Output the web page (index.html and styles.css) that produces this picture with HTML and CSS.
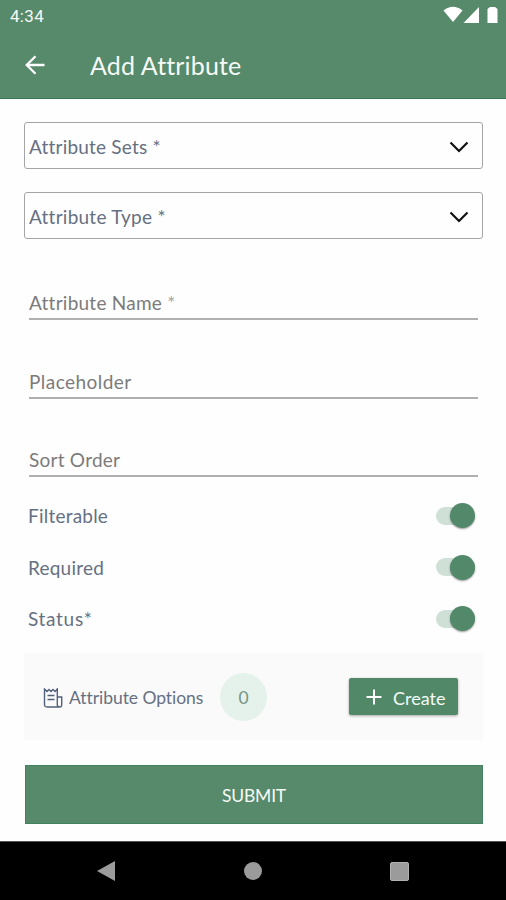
FILE: index.html
```html
<!DOCTYPE html>
<html lang="en">
<head>
<meta charset="utf-8">
<title>Add Attribute</title>
<link rel="stylesheet" href="styles.css">
</head>
<body>
<header class="header">
  <div class="statusbar">
    <span class="clock">4:34</span>
    <svg class="signals" width="56" height="18" viewBox="0 0 56 18" fill="#fff"><path d="M0.5 4.5Q10 -3 19.500 4.500L10 16Z"/><path d="M36 1V17H20.500Z"/><path d="M44.500 3L47 1H52L54.500 3V17H44.500Z"/></svg>
  </div>
  <div class="appbar">
    <svg width="20" height="20" viewBox="0 0 20 20" fill="none" stroke="#fff" stroke-width="2.300"><path d="M19.500 10H2M10.500 1.200L1.700 10L10.500 18.800"/></svg>
    <h1 class="title">Add Attribute</h1>
  </div>
</header>
<main class="form">
  <div class="select"><span class="sets">Attribute Sets *</span><svg width="20" height="12" viewBox="0 0 20 12" fill="none" stroke="#111" stroke-width="2.200"><path d="M1.500 1.500L10 10L18.500 1.500"/></svg></div>
  <div class="select"><span class="type">Attribute Type *</span><svg width="20" height="12" viewBox="0 0 20 12" fill="none" stroke="#111" stroke-width="2.200"><path d="M1.500 1.500L10 10L18.500 1.500"/></svg></div>
  <div class="fields">
    <div class="field"><span class="name">Attribute Name <i class="star">*</i></span></div>
    <div class="field"><span class="holder">Placeholder</span></div>
    <div class="field"><span class="sort">Sort Order</span></div>
  </div>
  <div class="switches">
    <div class="row"><span class="filterable">Filterable</span><span class="track"><span class="thumb"></span></span></div>
    <div class="row"><span class="required">Required</span><span class="track"><span class="thumb"></span></span></div>
    <div class="row"><span class="status">Status*</span><span class="track"><span class="thumb"></span></span></div>
  </div>
  <section class="options">
    <svg width="20" height="20" viewBox="0 0 20 20" fill="none" stroke="#52627a" stroke-width="1.400"><path d="M1.500 1L4 3.500L6 1.500L8 3.500L10 1.500L12 3.500L14.300 1V16.500Q14.300 19 16.500 19H4Q1.500 19 1.500 16.500ZM14.300 9H18.700V16.800Q18.700 19 16.500 19M4.500 7.500H11.500M4.500 11.500H11.500"/></svg>
    <span class="options-label">Attribute Options</span>
    <span class="count">0</span>
    <button class="create"><svg width="16" height="16" viewBox="0 0 16 16" stroke="#fff" stroke-width="2"><path d="M8 0.500V15.500M0.500 8H15.500"/></svg><span>Create</span></button>
  </section>
  <button class="submit">SUBMIT</button>
</main>
<nav class="navbar">
  <svg width="20" height="22" viewBox="0 0 20 22"><path d="M1 11L19 1V21Z" fill="#9b9b9b"/></svg>
  <span class="home"></span>
  <span class="recent"></span>
</nav>
</body>
</html>
```
FILE: styles.css
```css
* { box-sizing: border-box; }
body {
  margin: 0;
  height: 900px;
  display: flex;
  flex-direction: column;
  background: #fefefe;
  color: #667082;
  font: 19px/24px Lato, "Liberation Sans", sans-serif;
  font-variant-ligatures: none;
  white-space: nowrap;
}
button { border: 0; padding: 0; color: #f5faf6; font: inherit; }
svg { display: block; flex: none; }

.header { height: 99px; background: #57896b; border-bottom: 1px solid #397a55; color: #f5faf6; }
.statusbar { height: 32px; padding: 0 7px 0 10px; display: flex; justify-content: space-between; align-items: center; }
.signals { margin-bottom: 2px; }
.clock { font: 17px/20px Roboto, sans-serif; letter-spacing: .3px; }
.appbar { height: 66px; padding-left: 25px; display: flex; align-items: center; gap: 45px; }
.title { margin: 0 0 1px; font-size: 25px; line-height: 32px; font-weight: 400; letter-spacing: .15px; }

.form { height: 742px; padding: 23px 23px 0 24px; }
.select {
  height: 47px;
  margin-bottom: 23px;
  padding: 2px 13px 0 4px;
  border: 1px solid #a5a5a5;
  border-radius: 3px;
  display: flex;
  align-items: center;
  justify-content: space-between;
}
.sets { letter-spacing: .2px; }
.type, .name { letter-spacing: .25px; }
.holder { letter-spacing: .45px; }
.sort { letter-spacing: .25px; }
.filterable, .required { letter-spacing: .22px; }
.status { letter-spacing: .7px; }

.fields { padding: 12px 5px 0; color: #7b7b7b; }
.field { height: 78.5px; padding: 0 0 3px; display: flex; align-items: flex-end; border-bottom: 2px solid #b0b0b0; }
.field:first-child { height: 46px; }
.star { font-style: normal; color: #a5a5a5; }

.switches { padding: 27px 8px 0 4px; }
.row { height: 51.5px; display: flex; justify-content: space-between; align-items: flex-start; }
.row:last-child { height: 39px; }
.row .track { width: 39px; height: 18px; margin-top: 2.500px; border-radius: 9px; background: #cfe0d7; display: flex; justify-content: flex-end; align-items: center; }
.thumb { width: 25px; height: 25px; border-radius: 50%; background: #51896a; box-shadow: 0 1px 2px #0006; }

.options { height: 87px; margin-top: 7px; padding: 0 25px 0 19px; display: flex; align-items: center; background: #fafafa; }
.options svg { margin-top: 2px; }
.options-label { margin-left: 6px; width: 135px; font-size: 17.5px; letter-spacing: -.05px; padding-top: 3px; }
.count { width: 47px; height: 48px; margin-left: 16px; border-radius: 50%; background: #e5f2ec; color: #759582; font-size: 17.5px; display: flex; align-items: center; justify-content: center; padding-top: 3px; }
.create { width: 109px; height: 37px; margin-left: auto; padding: 2px 0 0 17px; border-radius: 2px; background: #518968; box-shadow: 0 1px 3px #0005; font-size: 18px; display: flex; align-items: center; gap: 11px; }
.options .create svg { margin: 0 0 2px; }
.submit { display: block; width: 458px; height: 59px; margin: 25px 0 0 1px; padding-top: 2px; background: #57896b; border: 1px solid #438260; font-size: 17.5px; letter-spacing: -.2px; }

.navbar { height: 59px; padding: 0 97px 0 96px; display: flex; align-items: center; justify-content: space-between; background: #000; border-top: 1px solid #555; }
.home { width: 18px; height: 18px; border-radius: 50%; background: #9b9b9b; }
.recent { width: 19px; height: 19px; border-radius: 2px; background: #9b9b9b; border: 1px solid #b1b1b1; }
```
